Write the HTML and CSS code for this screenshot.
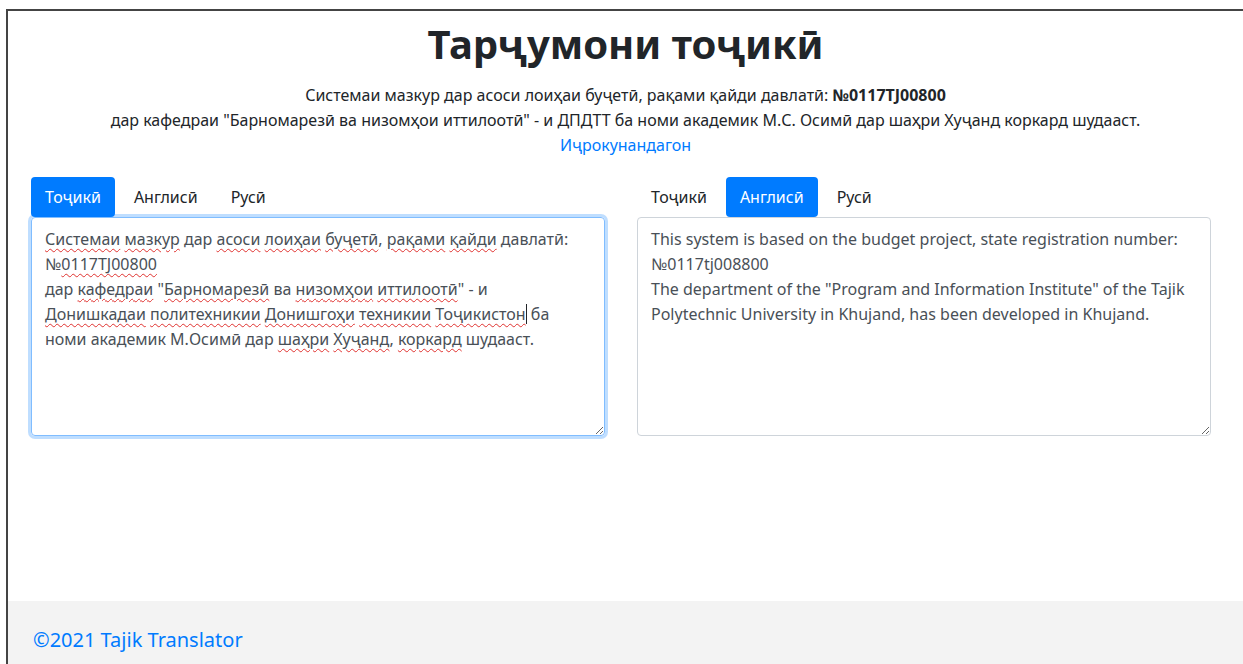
FILE: index.html
```html
<!DOCTYPE html>
<html lang="tg">
<head>
<meta charset="utf-8">
<title>Тарҷумони тоҷикӣ</title>
<link rel="stylesheet" href="styles.css">
</head>
<body>
<div class="frame">
  <header class="intro">
    <h1 class="title">Тарҷумони тоҷикӣ</h1>
    <p class="lead-line">Системаи мазкур дар асоси лоиҳаи буҷетӣ, рақами қайди давлатӣ: <b>№0117TJ00800</b></p>
    <p class="lead-line">дар кафедраи "Барномарезӣ ва низомҳои иттилоотӣ" - и ДПДТТ ба номи академик М.С. Осимӣ дар шаҳри Хуҷанд коркард шудааст.</p>
    <p class="lead-line"><a class="link" href="#">Иҷрокунандагон</a></p>
  </header>

  <main class="panes">
    <section class="pane">
      <nav class="tabs">
        <a class="tab active" href="#">Тоҷикӣ</a>
        <a class="tab" href="#">Англисӣ</a>
        <a class="tab" href="#">Русӣ</a>
      </nav>
      <div class="box focused" contenteditable="true" spellcheck="false">
        <div><span class="typo">Системаи</span> <span class="typo">мазкур</span> дар <span class="typo">асоси</span> <span class="typo">лоиҳаи</span> <span class="typo">буҷетӣ</span>, <span class="typo">рақами</span> <span class="typo">қайди</span> давлатӣ:</div>
        <div>№<span class="typo">0117TJ00800</span></div>
        <div>дар <span class="typo">кафедраи</span> "<span class="typo">Барномарезӣ</span> ва <span class="typo">низомҳои</span> <span class="typo">иттилоотӣ</span>" - и</div>
        <div><span class="typo">Донишкадаи</span> <span class="typo">политехникии</span> <span class="typo">Донишгоҳи</span> <span class="typo">техникии</span> <span class="typo">Тоҷикистон</span><span class="caret"></span> ба</div>
        <div>номи академик М.Осимӣ дар <span class="typo">шаҳри</span> <span class="typo">Хуҷанд</span>, <span class="typo">коркард</span> шудааст.</div>
      </div>
    </section>

    <section class="pane">
      <nav class="tabs">
        <a class="tab" href="#">Тоҷикӣ</a>
        <a class="tab active" href="#">Англисӣ</a>
        <a class="tab" href="#">Русӣ</a>
      </nav>
      <div class="box" spellcheck="false">
        <div>This system is based on the budget project, state registration number:</div>
        <div>№0117tj008800</div>
        <div>The department of the "Program and Information Institute" of the Tajik</div>
        <div>Polytechnic University in Khujand, has been developed in Khujand.</div>
      </div>
    </section>
  </main>

  <footer class="footer">
    <a class="link footer-link" href="#">©2021 Tajik Translator</a>
  </footer>
</div>
</body>
</html>
```

FILE: styles.css
```css
* {
  box-sizing: border-box;
}

html, body {
  margin: 0;
  padding: 0;
  background: #ffffff;
}

body {
  font-family: "Noto Sans", "Open Sans", sans-serif;
  font-size: 16px;
  color: #212529;
  padding: 9px 0 0 6px;
}

.frame {
  border-top: 2px solid #444;
  border-left: 2px solid #444;
  min-height: calc(100vh - 9px);
  display: flex;
  flex-direction: column;
}

.intro {
  text-align: center;
  padding-top: 9px;
}

.title {
  margin: 0 0 15px;
  font-size: 40px;
  line-height: 48px;
  font-weight: 700;
  color: #212529;
}

.lead-line {
  margin: 0;
  line-height: 25px;
}

.lead-line b {
  font-weight: 700;
}

.link {
  color: #007bff;
  text-decoration: none;
}

.panes {
  display: grid;
  grid-template-columns: 1fr 1fr;
  column-gap: 32px;
  padding: 19px 32px 0 23px;
}

.tabs {
  display: flex;
  gap: 5px;
  height: 40px;
}

.tab {
  display: block;
  padding: 8px 14px;
  line-height: 24px;
  color: #212529;
  text-decoration: none;
  border-radius: 4px;
}

.tab.active {
  background: #007bff;
  color: #ffffff;
}

.box {
  height: 219px;
  border: 1px solid #ced4da;
  border-radius: 4px;
  padding: 9px 13px;
  line-height: 25px;
  color: #495057;
  overflow: auto;
  resize: vertical;
  outline: none;
}

.box.focused {
  border-color: #80bdff;
  box-shadow: 0 0 0 3px rgba(0, 123, 255, 0.25);
}

.typo {
  text-decoration: underline wavy #e0322f;
  text-decoration-thickness: 1px;
  text-underline-offset: 3px;
}

.caret {
  display: inline-block;
  width: 1px;
  height: 20px;
  background: #212529;
  vertical-align: -4px;
}

.footer {
  margin-top: auto;
  height: 63px;
  background: #f3f3f3;
  padding: 0 0 0 25px;
  display: flex;
  align-items: center;
}

.footer-link {
  font-size: 20px;
  line-height: 26px;
  padding-top: 15px;
}
```
